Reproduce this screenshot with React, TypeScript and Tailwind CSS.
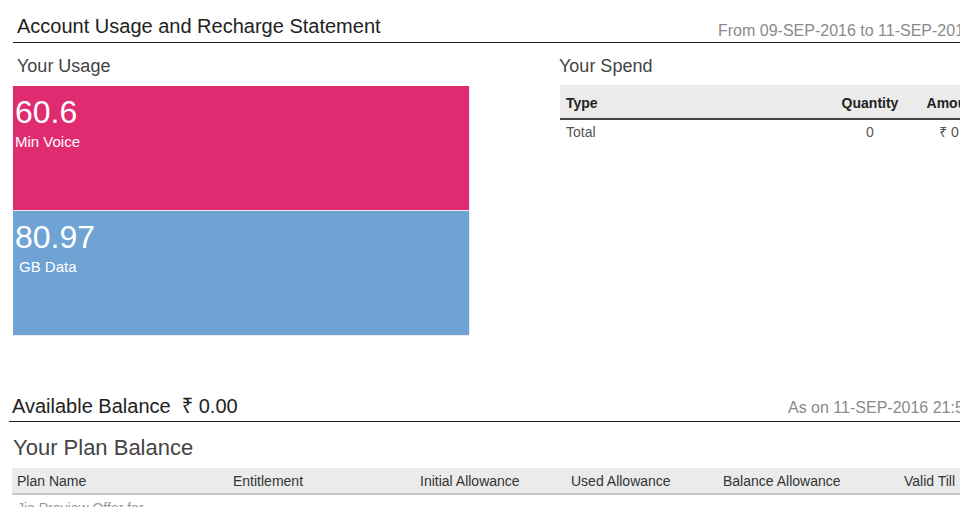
import React from "react";

const font = "font-['Liberation_Sans','Noto_Sans',sans-serif]";

const usage = [
    { value: "60.6", label: "Min Voice", bg: "bg-[#e02b70]", indent: "" },
    { value: "80.97", label: "GB Data", bg: "bg-[#6ea3d4]", indent: "pl-[4px]" },
];

const planCols = [
    { label: "Plan Name", w: "w-[216px]" },
    { label: "Entitlement", w: "w-[187px]" },
    { label: "Initial Allowance", w: "w-[151px]" },
    { label: "Used Allowance", w: "w-[152px]" },
    { label: "Balance Allowance", w: "w-[181px]" },
    { label: "Valid Till", w: "w-[120px]" },
];

const App: React.FC = () => {
    return (
        <div className={`w-[960px] h-[507px] overflow-hidden bg-white ${font}`}>
            <div className="w-[1040px]">
                {/* Statement header */}
                <div className="ml-[13px] mt-[14px] flex items-end border-b border-[#222] pb-[4px]">
                    <div className="w-[705px] pl-[4px] text-[20px] leading-[24px] text-[#222]">
                        Account Usage and Recharge Statement
                    </div>
                    <div className="text-[16px] leading-[14px] text-[#8a8a8a] whitespace-nowrap">
                        From 09-SEP-2016 to 11-SEP-2016
                    </div>
                </div>

                <div className="flex">
                    {/* Your Usage */}
                    <div className="ml-[13px] w-[457px]">
                        <div className="mt-[12px] mb-[9px] pl-[4px] text-[18px] leading-[22px] text-[#444]">
                            Your Usage
                        </div>
                        {usage.map((u) => (
                            <div
                                key={u.label}
                                className={`${u.bg} h-[125px] border-r border-b border-[#e9eef3] pl-[2px] pt-[8px] text-white`}
                            >
                                <div className="text-[32px] leading-[36px]">{u.value}</div>
                                <div className={`${u.indent} mt-[3px] text-[15px] leading-[18px]`}>{u.label}</div>
                            </div>
                        ))}
                    </div>

                    {/* Your Spend */}
                    <div className="ml-[89px] w-[440px]">
                        <div className="mt-[12px] mb-[8px] text-[18px] leading-[22px] text-[#444]">
                            Your Spend
                        </div>
                        <div className="ml-[1px] text-[14px]">
                            <div className="flex h-[35px] items-center pt-[4px] bg-[#ebebeb] border-b-2 border-[#444] font-bold text-[#222]">
                                <div className="w-[272px] pl-[6px]">Type</div>
                                <div className="w-[76px] text-center">Quantity</div>
                                <div className="w-[90px] text-center">Amount</div>
                            </div>
                            <div className="flex h-[24px] items-center text-[#555]">
                                <div className="w-[272px] pl-[6px]">Total</div>
                                <div className="w-[76px] text-center">0</div>
                                <div className="w-[90px] pr-[8px] text-center">₹ 0</div>
                            </div>
                        </div>
                    </div>
                </div>

                {/* Available balance */}
                <div className="ml-[9px] mt-[58px] flex items-end border-b border-[#222] pb-[3px]">
                    <div className="w-[779px] pl-[3px] text-[20px] leading-[24px] text-[#222]">
                        Available Balance&nbsp; ₹ 0.00
                    </div>
                    <div className="text-[16px] leading-[20px] text-[#8a8a8a] whitespace-nowrap">
                        As on 11-SEP-2016 21:52
                    </div>
                </div>

                {/* Plan balance */}
                <div className="ml-[12px]">
                    <div className="mt-[13px] mb-[7px] pl-[1px] text-[22px] leading-[26px] text-[#444]">
                        Your Plan Balance
                    </div>
                    <div className="flex h-[27px] items-center pt-[1px] bg-[#ebebeb] border-b-2 border-[#c8c8c8] text-[14px] text-[#333]">
                        {planCols.map((c) => (
                            <div key={c.label} className={`${c.w} pl-[5px] whitespace-nowrap`}>
                                {c.label}
                            </div>
                        ))}
                    </div>
                    <div className="pl-[5px] pt-[4px] text-[14px] leading-[18px] text-[#999]">
                        Jio Preview Offer for
                    </div>
                </div>
            </div>
        </div>
    );
};

export default App;
